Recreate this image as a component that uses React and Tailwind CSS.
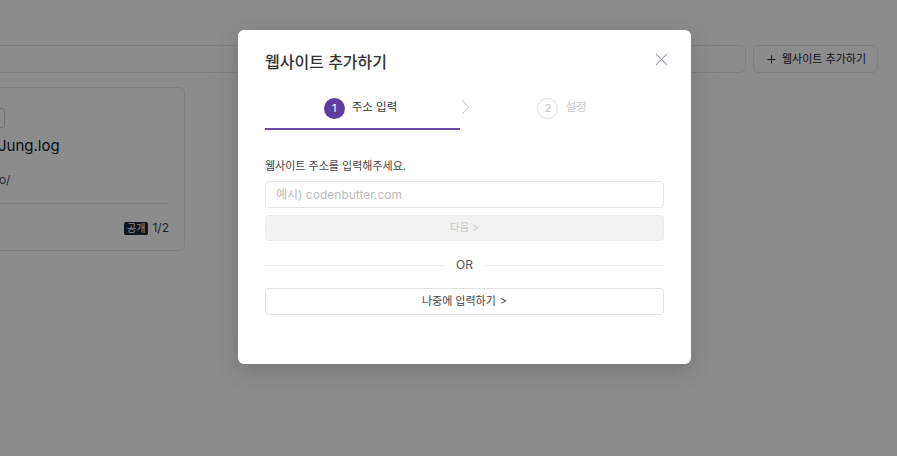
import { X, Plus } from 'lucide-react';

const font = "font-['Inter','Noto_Sans_CJK_KR',sans-serif]";

const Chevron = ({ className }) => (
  <svg viewBox="0 0 10 17" className={className} fill="none" stroke="currentColor" strokeWidth="1.2">
    <polyline points="1.5,1 8.5,8.5 1.5,16" />
  </svg>
);

const Background = () => (
  <div className="min-h-screen bg-white pt-[45px] pr-[19px]">
    {/* toolbar */}
    <div className="flex gap-[7px] -ml-[40px]">
      <div className="flex-1 h-[28px] border border-gray-200 rounded-md" />
      <button className="w-[125px] h-[28px] border border-gray-200 rounded-md flex items-center justify-center gap-[4px] text-[11px] text-gray-800">
        <Plus size={13} strokeWidth={1.8} />
        <span>웹사이트 추가하기</span>
      </button>
    </div>
    {/* site card */}
    <div className="mt-[14px] -ml-[40px] w-[225px] h-[164px] border border-gray-200 rounded-md pl-[37px] pr-[15px] pt-[20px]">
      <div className="w-[7px] h-[20px] border border-gray-300 rounded-[3px]" />
      <div className="mt-[7px] text-[15px] text-gray-900 leading-[22px]">Jung.log</div>
      <div className="mt-[14px] text-[12px] text-gray-600 leading-[18px] -ml-[2px]">io/</div>
      <div className="mt-[14px] border-t border-gray-200 -ml-[40px]" />
      <div className="mt-[15px] flex justify-end items-center gap-[4px]">
        <span className="bg-[#1f2937] text-white text-[10px] leading-[13px] px-[3px] rounded-[2px]">공개</span>
        <span className="text-[12px] text-gray-700">1/2</span>
      </div>
    </div>
  </div>
);

const Modal = () => (
  <div className="ml-[238px] mt-[30px] w-[453px] h-[334px] bg-white rounded-md shadow-[0_6px_24px_rgba(0,0,0,0.18)] pt-[19px] px-[27px]">
    <div className="flex items-center justify-between h-[26px]">
      <h2 className="text-[16px] font-medium text-[#333]">웹사이트 추가하기</h2>
      <X size={21} strokeWidth={1.2} className="text-[#8b929c] -mr-[8px] -mt-[5px]" />
    </div>

    {/* steps */}
    <div className="mt-[13px] flex">
      <div className="w-[195px] h-[42px] flex items-center justify-center gap-[7px] border-b-2 border-[#6a4ca6] pr-[4px]">
        <span className="w-[21px] h-[21px] rounded-full bg-[#5e3d9f] text-white text-[11px] flex items-center justify-center">1</span>
        <span className="text-[11.5px] text-[#333]">주소 입력</span>
      </div>
      <div className="w-[10px] flex items-start pt-[11px] pl-[1px]">
        <Chevron className="w-[9px] h-[16px] text-[#c8c8c8]" />
      </div>
      <div className="flex-1 h-[42px] flex items-center justify-center gap-[7px] pb-[2px] pr-[10px]">
        <span className="w-[21px] h-[21px] rounded-full border border-[#dcdcdc] text-[#c4c4c4] text-[11px] flex items-center justify-center">2</span>
        <span className="text-[11.5px] text-[#c8c8c8]">설정</span>
      </div>
    </div>

    <div className="mt-[27px] text-[11px] leading-[18px] text-[#444]">웹사이트 주소를 입력해주세요.</div>
    <input
      className="mt-[6px] w-full h-[27px] border border-[#e6e6e6] rounded-[4px] px-[10px] text-[12px] text-[#333] placeholder:text-[#bdbdbd] outline-none"
      placeholder="예시) codenbutter.com"
    />
    <button className="mt-[7px] w-full h-[26px] bg-[#f2f2f2] border border-[#ececec] rounded-[4px] text-[10.5px] text-[#c9c9c9]">
      다음 &gt;
    </button>

    <div className="mt-[15px] h-[18px] flex items-center gap-[12px]">
      <div className="flex-1 border-t border-[#ececec]" />
      <span className="text-[12px] text-[#555]">OR</span>
      <div className="flex-1 border-t border-[#ececec]" />
    </div>

    <button className="mt-[14px] w-full h-[27px] border border-[#e3e3e3] rounded-[4px] text-[11px] text-[#444] flex items-center justify-center gap-[4px]">
      <span>나중에 입력하기</span>
      <span className="text-[11px]">&gt;</span>
    </button>
  </div>
);

export default function App() {
  return (
    <div className={`relative h-screen overflow-hidden ${font}`}>
      <Background />
      <div className="absolute inset-0 bg-black/45">
        <Modal />
      </div>
    </div>
  );
}
